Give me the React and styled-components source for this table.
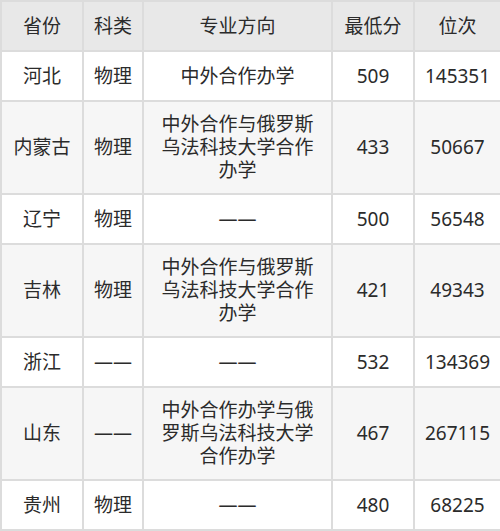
import React from "react";
import styled, { createGlobalStyle } from "styled-components";

const Global = createGlobalStyle`
  html, body { margin: 0; padding: 0; background: #fff; }
  body { font-family: "Noto Sans", "Noto Sans CJK SC", sans-serif; }
`;

const Table = styled.table`
  width: 500px;
  border-collapse: collapse;
  table-layout: fixed;
  color: #2b2b2b;
  font-size: 19px;
`;

const HeadCell = styled.th`
  background: #e8e8e8;
  border: 2px solid #dcdcdc;
  height: 48px;
  padding: 0;
  font-weight: normal;
  line-height: 23px;
  text-align: center;
  vertical-align: middle;
  white-space: nowrap;
`;

const Row = styled.tr`
  background: ${(p) => (p.$alt ? "#f6f6f6" : "#ffffff")};
`;

const Cell = styled.td`
  border: 2px solid #dcdcdc;
  height: 50px;
  padding: 11px ${(p) => (p.$wrap ? "14px" : "0")};
  box-sizing: border-box;
  line-height: 23px;
  text-align: center;
  vertical-align: middle;
  white-space: ${(p) => (p.$wrap ? "normal" : "nowrap")};
  word-break: break-all;
`;

const widths = [82, 60, 189, 82, 87];
const headers = ["省份", "科类", "专业方向", "最低分", "位次"];

const rows = [
  ["河北", "物理", "中外合作办学", "509", "145351"],
  ["内蒙古", "物理", "中外合作与俄罗斯乌法科技大学合作办学", "433", "50667"],
  ["辽宁", "物理", "——", "500", "56548"],
  ["吉林", "物理", "中外合作与俄罗斯乌法科技大学合作办学", "421", "49343"],
  ["浙江", "——", "——", "532", "134369"],
  ["山东", "——", "中外合作办学与俄罗斯乌法科技大学合作办学", "467", "267115"],
  ["贵州", "物理", "——", "480", "68225"],
];

export default function App() {
  return (
    <>
      <Global />
      <Table>
        <colgroup>
          {widths.map((w, i) => (
            <col key={i} style={{ width: w }} />
          ))}
        </colgroup>
        <thead>
          <tr>
            {headers.map((h) => (
              <HeadCell key={h}>{h}</HeadCell>
            ))}
          </tr>
        </thead>
        <tbody>
          {rows.map((r, i) => (
            <Row key={i} $alt={i % 2 === 1}>
              {r.map((c, j) => (
                <Cell key={j} $wrap={j === 2}>
                  {c}
                </Cell>
              ))}
            </Row>
          ))}
        </tbody>
      </Table>
    </>
  );
}
